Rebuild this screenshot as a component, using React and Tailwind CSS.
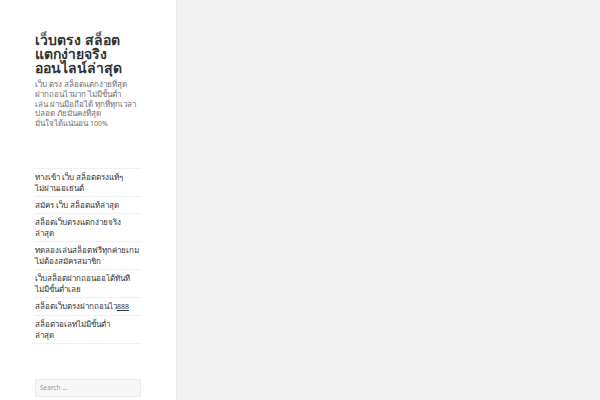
import React from "react";

const links = [
  ["ทางเข้า เว็บ สล็อตตรงแท้ๆ", "ไม่ผ่านเอเย่นต์"],
  ["สมัคร เว็บ สล็อตแท้ล่าสุด"],
  ["สล็อตเว็บตรงแตกง่ายจริง", "ล่าสุด"],
  ["ทดลองเล่นสล็อตฟรีทุกค่ายเกม", "ไม่ต้องสมัครสมาชิก"],
  ["เว็บสล็อตฝากถอนออโต้ทันที", "ไม่มีขั้นต่ำเลย"],
  ["สล็อตเว็บตรงฝากถอนไว", null, "888"],
  ["สล็อตวอเลทไม่มีขั้นต่ำ", "ล่าสุด"],
];

export default function App() {
  return (
    <div
      className="flex w-[600px] h-[400px] overflow-hidden bg-[#f1f1f1]"
      style={{ fontFamily: '"Noto Sans", "Liberation Sans", sans-serif' }}
    >
      <aside className="w-[176px] h-full bg-white shrink-0 px-[35px] pt-[33px] shadow-[0_0_1px_rgba(0,0,0,0.15)] z-10">
        <div className="text-[14px] leading-[14px] font-bold text-[#333] whitespace-nowrap">
          <div>เว็บตรง สล็อต</div>
          <div>แตกง่ายจริง</div>
          <div>ออนไลน์ล่าสุด</div>
        </div>
        <div className="mt-[4px] text-[8px] leading-[9.75px] text-[#707070] whitespace-nowrap">
          <div>เว็บ ตรง สล็อตแตกง่ายที่สุด</div>
          <div>ฝากถอนไวมาก ไม่มีขั้นต่ำ</div>
          <div>เล่น ผ่านมือถือได้ ทุกที่ทุกเวลา</div>
          <div>ปลอด ภัยมั่นคงที่สุด</div>
          <div>
            มั่นใจได้แน่นอน <span className="text-[7px]">100%</span>
          </div>
        </div>
        <ul className="mt-[39px] border-t border-[#f0f0f0] text-[8px] leading-[11px] text-[#333] whitespace-nowrap">
          {links.map((l, i) => (
            <li key={i} className="border-b border-[#f0f0f0] pt-[2px] pb-[3px]">
              {l[2] ? (
                <div>
                  {l[0]}
                  <span className="text-[7px] underline">{l[2]}</span>
                </div>
              ) : (
                l.map((t, j) => <div key={j}>{t}</div>)
              )}
            </li>
          ))}
        </ul>
        <div className="mt-[35px] h-[18px] border border-[#eaeaea] bg-[#f7f7f7] flex items-center px-[4px] text-[6.5px] text-[#999]">
          Search …
        </div>
      </aside>
      <main className="flex-1" />
    </div>
  );
}
